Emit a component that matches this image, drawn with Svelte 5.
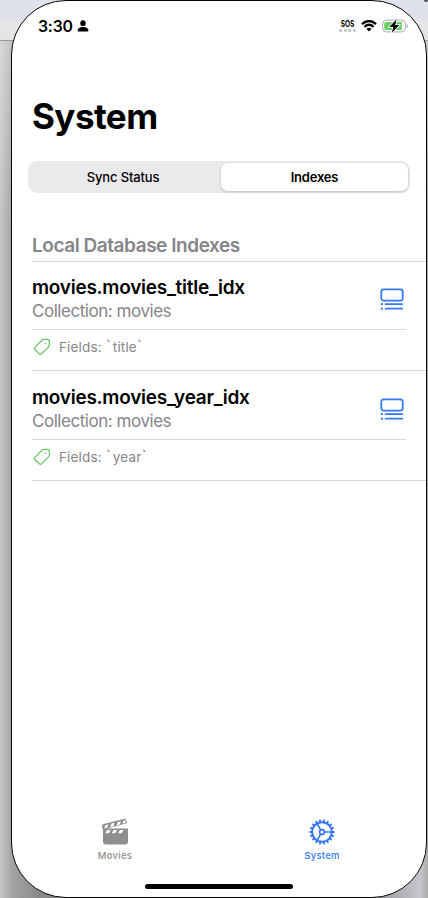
<script>
  const indexes = [
    { name: 'movies.movies_title_idx', collection: 'movies', field: 'title' },
    { name: 'movies.movies_year_idx', collection: 'movies', field: 'year' }
  ];
  const teeth = Array.from({ length: 18 }, (_, i) => i * 20 + 10);
</script>

<div class="desktop">
  <main class="phone">
    <header class="status">
      <span class="time">3:30</span>
      <svg class="person" width="12" height="12" viewBox="0 0 12 12"><ellipse cx="6" cy="3.2" rx="2.7" ry="2.9" /><path d="M.6 10.5C.6 8.2 3 6.9 6 6.9s5.4 1.3 5.4 3.6c0 .7-.4 1-1.1 1H1.7c-.7 0-1.1-.3-1.1-1Z" /></svg>
      <span class="grow"></span>
      <div class="carrier"><span>SOS</span><div class="dots"><i></i><i></i><i></i><i></i></div></div>
      <svg class="wifi" width="16" height="12" viewBox="0 0 16 12"><path d="M1 4.1Q8-2.1 15 4.1M3.4 6.8q4.6-4 9.2 0" fill="none" stroke="#000" stroke-width="2.3" /><path d="M5.4 8.8Q8 6.7 10.6 8.8L8 11.6Z" /></svg>
      <svg class="battery" width="27" height="16" viewBox="0 0 27 16"><rect x=".6" y="2.1" width="22.8" height="11.8" rx="3.8" fill="#fff" stroke="#aaa" /><path d="M4.4 3.9h15.4v8.2H4.4a2.2 2.2 0 0 1-2.2-2.2V6.1A2.2 2.2 0 0 1 4.4 3.9Z" fill="#68ce67" /><path d="M24.6 5.9q1.4.6 1.4 2.1t-1.4 2.1Z" fill="#aaa" /><path d="M14.6 1.3 7.3 9h4l-1.5 5.9L17.2 7h-4Z" stroke="#fff" stroke-width="1.6" paint-order="stroke" /></svg>
    </header>

    <h1>System</h1>
    <div class="segments">
      <button>Sync Status</button>
      <button class="selected">Indexes</button>
    </div>

    <section>
      <h2>Local Database Indexes</h2>
      {#each indexes as item}
        <article>
          <div class="summary">
            <div>
              <h3>{item.name}</h3>
              <p>Collection: {item.collection}</p>
            </div>
            <svg width="24" height="23" viewBox="0 0 24 23" fill="none" stroke="#3478f6" stroke-width="1.8"><rect x="1.3" y="1.3" width="21.4" height="11.3" rx="2.4" /><path d="M5.6 16.1h16.6M5.6 20.7h16.6" stroke-linecap="round" /><path d="M.9 16.1h2M.9 20.7h2" stroke-width="2" /></svg>
          </div>
          <div class="fields">
            <svg width="18" height="18" viewBox="0 0 18 18" fill="none" stroke="#65c466" stroke-width="1.2" stroke-linejoin="round"><path d="M9 2.3Q9.9 1.4 11.2 1.4h3q2.2 0 2.2 2.2v3q0 1.3-.9 2.2l-6.8 6.9q-1.3 1.3-2.6 0L2 11.7q-1.3-1.3 0-2.6Z" /><circle cx="12.4" cy="5.3" r=".8" fill="#65c466" stroke="none" /></svg>
            <span>Fields: <b>`</b>{item.field}<b>`</b></span>
          </div>
        </article>
      {/each}
    </section>

    <nav>
      <div class="tab">
        <svg width="28" height="28" viewBox="0 0 28 28"><path d="M1 8.6Q.6 6.5 2.7 6L22.5.9Q24.8.3 25.5 2.5L26 5.2 5.7 10.4H27v13.1q0 3-3 3H5q-3 0-3-3V12Z" fill="#8e8e8e" /><path d="m4.3 7.2 3.2-.8L6.2 9.8l-3.2.8ZM10.5 5.6l3.2-.8-1.3 3.4-3.2.8ZM16.8 4l3.2-.8-1.3 3.4-3.2.8ZM22.6 2.5l1.6-.4.5 2.6-3.2.8ZM6.1 11.9h3.6l-1.8 3.4H4.3ZM12.5 11.9h3.6l-1.8 3.4h-3.6ZM18.9 11.9h3.6l-1.8 3.4h-3.6Z" fill="#fff" /></svg>
        <span>Movies</span>
      </div>
      <div class="tab active">
        <svg width="28" height="28" viewBox="-14 -14 28 28" fill="none" stroke="#3478f6"><circle r="9.8" stroke-width="1.9" /><circle r="2.4" stroke-width="1.6" /><path d="M2.5 0h7.2M-1.3-2.2-5-8.5M-1.3 2.2-5 8.5" stroke-width="1.6" />{#each teeth as angle}<path d="M0-10v-2.5" stroke-width="1.9" transform="rotate({angle})" />{/each}</svg>
        <span>System</span>
      </div>
    </nav>
    <div class="home"></div>
  </main>
</div>

<style>
  :global(body) { margin: 0; overflow: hidden; }
  * { box-sizing: border-box; }
  .desktop {
    width: 428px; height: 898px; padding-left: 11px;
    font-family: Inter, "Liberation Sans", sans-serif;
    background:
      radial-gradient(circle at 426px 0, #555 0 1.5px, transparent 2.5px),
      linear-gradient(#dfe3ec, #dde0e8 19px, #e6e6e8 20px, #e3e3e4 40px, #999 40px, #999 41px, transparent 41px),
      linear-gradient(#fff5 41px, #fff0 220px),
      linear-gradient(90deg, #c6c7c8, #a2a3a4 12px, #88898b 40px, #88898b 360px, #c5c6ca 420px, #aaa);
  }
  .phone { width: 416px; height: 898px; border: 1.5px solid #050505; border-radius: 55px; background: #fff; overflow: hidden; display: flex; flex-direction: column; }
  .status { height: 50px; flex: none; padding: 0 17px 0 26px; display: flex; align-items: center; }
  .time { font-size: 15.8px; font-weight: 600; letter-spacing: -.2px; }
  .person { margin-left: 4px; }
  .grow { flex: 1; }
  .carrier { width: 17px; font-size: 8.6px; line-height: 8px; font-weight: 700; text-align: center; }
  .carrier span { display: block; margin: 0 -3px; transform: scaleX(.76); }
  .dots { display: flex; gap: 1.6px; margin-top: 1px; }
  .dots i { width: 3px; height: 3px; border-radius: 1px; background: #c9c9c9; }
  .wifi { margin: 0 5px 0 5px; }
  h1 { margin: 41px 0 0 20px; font-size: 35px; line-height: 48px; font-weight: 700; letter-spacing: -.55px; }
  .segments { display: flex; flex: none; width: 382px; height: 32px; margin: 21px 0 0 16px; padding: 2px; border-radius: 9px; background: #eaeaec; }
  button { width: 191px; padding: 0 5px 0 0; border: 0; background: none; font: 500 13px/28px Inter, sans-serif; letter-spacing: -.15px; color: #000; }
  .selected { width: 187px; padding: 0; border-radius: 7px; background: #fff; font-weight: 600; letter-spacing: -.2px; box-shadow: 0 1px 3px #0003; }
  section { margin: 40px 0 0 20px; }
  h2 { margin: 0; height: 29px; padding-top: 1px; border-bottom: 1px solid #d7d7d9; font-size: 19px; line-height: 24px; font-weight: 600; letter-spacing: -.45px; color: #858589; }
  article { height: 109px; border-bottom: 1px solid #d7d7d9; }
  article + article { height: 110px; padding-top: 1px; }
  .summary { height: 68px; margin-right: 20px; padding: 13px 2px 0 0; border-bottom: 1px solid #dadadc; display: flex; justify-content: space-between; }
  .summary svg { margin-top: 13px; }
  h3 { margin: 1px 0 0; font-size: 19px; line-height: 24px; font-weight: 600; letter-spacing: -.26px; }
  p { margin: 0; font-size: 17px; line-height: 23px; letter-spacing: -.46px; color: #858589; }
  .fields { display: flex; align-items: center; height: 34px; padding-left: 1px; font-size: 13.5px; color: #858589; }
  .fields span { margin-left: 8px; letter-spacing: .15px; }
  b { font-size: 16px; line-height: 14px; font-weight: 400; letter-spacing: 2px; }
  nav { margin-top: auto; flex: none; display: flex; height: 47px; }
  .tab { width: 206px; display: flex; flex-direction: column; align-items: center; font-size: 9.5px; line-height: 12px; font-weight: 500; letter-spacing: .25px; color: #8e8e8e; }
  .tab + .tab { width: 208px; }
  .tab span { margin-top: 4px; }
  .active { color: #3478f6; }
  .home { flex: none; width: 148px; height: 5px; margin: 19px 0 8px 133px; border-radius: 3px; background: #000; }
</style>
